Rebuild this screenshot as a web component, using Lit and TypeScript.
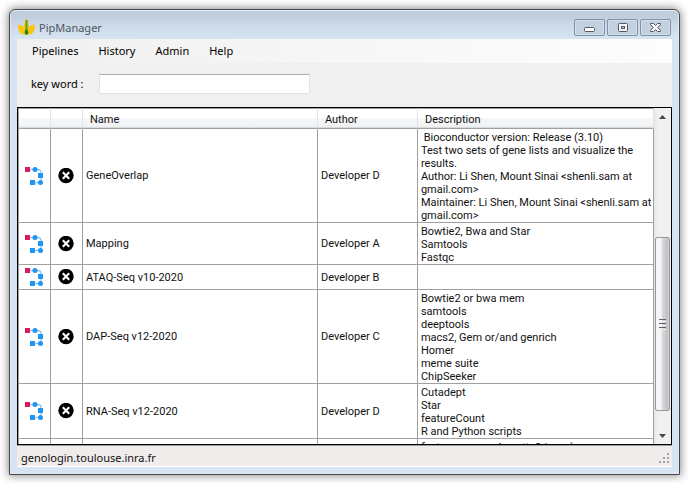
import { LitElement, html, css } from "lit";
import { customElement, property } from "lit/decorators.js";

interface Pipeline {
  name: string;
  author: string;
  description: string[];
}

const PIPELINES: Pipeline[] = [
  {
    name: "GeneOverlap",
    author: "Developer D",
    description: [
      " Bioconductor version: Release (3.10)",
      "Test two sets of gene lists and visualize the",
      "results.",
      "Author: Li Shen, Mount Sinai <shenli.sam at",
      "gmail.com>",
      "Maintainer: Li Shen, Mount Sinai <shenli.sam at",
      "gmail.com>",
    ],
  },
  { name: "Mapping", author: "Developer A", description: ["Bowtie2, Bwa and Star", "Samtools", "Fastqc"] },
  { name: "ATAQ-Seq v10-2020", author: "Developer B", description: [] },
  {
    name: "DAP-Seq v12-2020",
    author: "Developer C",
    description: [
      "Bowtie2 or bwa mem",
      "samtools",
      "deeptools",
      "macs2, Gem or/and genrich",
      "Homer",
      "meme suite",
      "ChipSeeker",
    ],
  },
  {
    name: "RNA-Seq v12-2020",
    author: "Developer D",
    description: ["Cutadept", "Star", "featureCount", "R and Python scripts"],
  },
  { name: "", author: "", description: ["features genes Annotte2d ssn )", "", ""] },
];

const runIcon = html`<svg width="19" height="18" viewBox="0 0 19 18" aria-hidden="true">
  <path d="M5 2.5H13Q16 2.5 16 5.5V15.5H8" fill="none" stroke="#8fc8f6" stroke-width="1.3" />
  <rect x="0" y="0" width="5" height="5" fill="#d81b60" />
  <circle cx="10" cy="2.5" r="2.5" fill="#2196f3" />
  <rect x="13" y="6" width="5" height="5" fill="#2196f3" />
  <circle cx="15.5" cy="15.5" r="2.5" fill="#2196f3" />
  <rect x="5" y="13" width="5" height="5" fill="#2196f3" />
</svg>`;

const removeIcon = html`<svg width="17" height="16" viewBox="0 0 17 16" aria-hidden="true">
  <circle cx="8" cy="7.5" r="7.7" fill="#000" />
  <path d="M4.8 4.3L11.2 10.7M11.2 4.3L4.8 10.7" stroke="#fff" stroke-width="2.1" />
</svg>`;

@customElement("title-bar")
export class TitleBar extends LitElement {
  static styles = css`
    :host {
      display: flex;
      align-items: center;
      height: 29px;
      padding: 6px 1px 0;
      box-sizing: border-box;
    }
    .logo {
      flex: none;
      margin-right: 4px;
    }
    .title {
      flex: 1;
      margin: 0;
      font: 11px/16px "Noto Sans", sans-serif;
      color: #4c5663;
    }
    .controls {
      display: flex;
      gap: 2px;
    }
    .control {
      display: grid;
      place-items: center;
      width: 31px;
      height: 17px;
      padding: 0;
      border: 1px solid #8290a8;
      border-radius: 2px;
      background: #c2d0e0;
      box-shadow: inset 0 0 0 1px #d3dfeb;
    }
  `;

  render() {
    return html`
      <svg class="logo" width="17" height="17" viewBox="0 0 17 17" aria-hidden="true">
        <path d="M0.3 6C4.5 5 8 9 7.8 15.3C3 16.5 -0.5 12 0.3 6Z" fill="#fcc60a" />
        <path d="M16.7 6C12.5 5 9 9 9.2 15.3C14 16.5 17.5 12 16.7 6Z" fill="#fcc60a" />
        <path d="M8.5 0C11.5 3 11.5 11 8.5 16C5.5 11 5.5 3 8.5 0Z" fill="#e3c009" />
        <path d="M8.5 1V11" stroke="#5e9a10" stroke-width="1.6" />
        <ellipse cx="8.5" cy="13.3" rx="1.8" ry="2.8" fill="#178a12" />
      </svg>
      <h1 class="title">PipManager</h1>
      <div class="controls">
        <button class="control" aria-label="Minimize">
          <svg width="12" height="11"><rect x="0.5" y="5.5" width="10" height="4" rx="1" fill="#fff" stroke="#535666" /></svg>
        </button>
        <button class="control" aria-label="Maximize">
          <svg width="12" height="11">
            <rect x="1.5" y="1.5" width="9" height="8" rx="1" fill="#f4f4f4" stroke="#535666" />
            <rect x="4.5" y="4.5" width="3" height="2" fill="#c2d0e0" stroke="#535666" />
          </svg>
        </button>
        <button class="control" aria-label="Close">
          <svg width="13" height="11">
            <path
              d="M1.5 1.5H4.5L6.5 3.5L8.5 1.5H11.5V2.5L8.8 5.5L11.5 8.5V9.5H8.5L6.5 7.5L4.5 9.5H1.5V8.5L4.2 5.5L1.5 2.5Z"
              fill="#f7f7f7"
              stroke="#535666"
            />
          </svg>
        </button>
      </div>
    `;
  }
}

@customElement("menu-bar")
export class MenuBar extends LitElement {
  static styles = css`
    :host {
      display: flex;
      gap: 4px;
      height: 24px;
      padding: 0 7px;
      background: linear-gradient(90deg, #f0f0f0, #fdfdfd);
    }
    .item {
      padding: 0 8px;
      border: 0;
      background: none;
      font: 11px/24px "Noto Sans", sans-serif;
      color: #000;
    }
  `;

  render() {
    return ["Pipelines", "History", "Admin", "Help"].map(
      (label) => html`<button class="item">${label}</button>`
    );
  }
}

@customElement("pipeline-grid")
export class PipelineGrid extends LitElement {
  @property({ attribute: false }) rows: Pipeline[] = [];

  static styles = css`
    :host {
      display: flex;
      min-height: 0;
      box-sizing: border-box;
      border: 1px solid #000;
      background: #fff;
      font: 11px/13px Roboto, "Liberation Sans", sans-serif;
      color: #111;
    }
    .viewport {
      flex: 1;
      min-width: 0;
      overflow: hidden;
    }
    .table {
      width: 100%;
      table-layout: fixed;
      border-collapse: separate;
      border-spacing: 0;
      border-left: 1px solid #a0a0a0;
    }
    .icon-col {
      width: 32px;
    }
    .name-col {
      width: 37%;
    }
    .author-col {
      width: 100px;
    }
    .head {
      height: 21px;
      box-sizing: border-box;
      padding: 2px 7px 0;
      border-top: 1px solid #a0a0a0;
      border-bottom: 1px solid #a0a0a0;
      border-right: 1px solid #e0e2e5;
      background: linear-gradient(#fff 0 45%, #f6f7f9 46%, #f1f2f4 92%, #d9dadc 93%);
      font-weight: normal;
      text-align: left;
    }
    .cell {
      height: 24px;
      padding: 0 3px;
      border-right: 1px solid #a0a0a0;
      border-bottom: 1px solid #a0a0a0;
      vertical-align: middle;
    }
    .icon-cell {
      padding: 0;
    }
    .icon-button {
      display: grid;
      place-items: center;
      width: 100%;
      padding: 0;
      border: 0;
      background: none;
    }
    .description {
      height: 22px;
      padding: 2px 3px 0;
      white-space: pre;
      overflow: hidden;
    }
    .line {
      height: 13px;
    }
    .scrollbar {
      display: flex;
      flex-direction: column;
      width: 17px;
      background: linear-gradient(90deg, #e6e6e6, #f0f0f0 4px, #f2f2f2);
    }
    .arrow {
      display: grid;
      place-items: center;
      height: 17px;
      padding: 0;
      border: 0;
      background: none;
    }
    .track {
      display: flex;
      flex-direction: column;
      flex: 1;
    }
    .before {
      flex: 113;
    }
    .thumb {
      display: flex;
      flex: 173;
      flex-direction: column;
      align-items: center;
      justify-content: center;
      gap: 1px;
      margin: 0 1px;
      border: 1px solid #979797;
      border-radius: 2px;
      box-sizing: border-box;
      background: linear-gradient(90deg, #f5f5f5 0 40%, #d8d8dc 50%, #bfc0c6 90%, #dcdcde);
    }
    .grip {
      width: 7px;
      height: 1px;
      border-top: 1px solid #60636b;
      border-bottom: 1px solid #f2f2f2;
    }
    .after {
      flex: 16;
    }
  `;

  render() {
    return html`
      <div class="viewport">
        <table class="table">
          <colgroup>
            <col class="icon-col" />
            <col class="icon-col" />
            <col class="name-col" />
            <col class="author-col" />
            <col />
          </colgroup>
          <thead>
            <tr>
              <th class="head" aria-label="Run"></th>
              <th class="head" aria-label="Remove"></th>
              <th class="head">Name</th>
              <th class="head">Author</th>
              <th class="head">Description</th>
            </tr>
          </thead>
          <tbody>
            ${this.rows.map(
              (row) => html`<tr>
                <td class="cell icon-cell"><button class="icon-button" aria-label="Run ${row.name}">${runIcon}</button></td>
                <td class="cell icon-cell">
                  <button class="icon-button" aria-label="Remove ${row.name}">${removeIcon}</button>
                </td>
                <td class="cell">${row.name}</td>
                <td class="cell">${row.author}</td>
                <td class="cell description">${row.description.map((line) => html`<div class="line">${line}</div>`)}</td>
              </tr>`
            )}
          </tbody>
        </table>
      </div>
      <div class="scrollbar">
        <button class="arrow" aria-label="Scroll up">
          <svg width="7" height="4"><path d="M0 4L3.5 0L7 4Z" fill="#44464c" /></svg>
        </button>
        <div class="track">
          <div class="before"></div>
          <div class="thumb"><i class="grip"></i><i class="grip"></i><i class="grip"></i></div>
          <div class="after"></div>
        </div>
        <button class="arrow" aria-label="Scroll down">
          <svg width="7" height="4"><path d="M0 0H7L3.5 4Z" fill="#44464c" /></svg>
        </button>
      </div>
    `;
  }
}

@customElement("app-root")
export class AppRoot extends LitElement {
  static styles = css`
    :host {
      display: block;
      box-sizing: border-box;
      height: 100vh;
      padding: 9px 8px 8px 9px;
      background: #fff;
    }
    .window {
      display: flex;
      flex-direction: column;
      box-sizing: border-box;
      height: 100%;
      padding: 0 7px 7px;
      border: 1px solid #45474d;
      border-radius: 6px 6px 0 0;
      background: linear-gradient(#bdcbdb 0, #c3cfde 8px, #cddae7 16px, #d7e4f1 29px);
      box-shadow:
        inset 0 0 0 1px #e3ebf4,
        0 0 8px 1px #8c8c8c;
    }
    .search {
      display: flex;
      align-items: center;
      height: 44px;
      padding: 0 14px 2px;
      box-sizing: border-box;
      gap: 15px;
      background: #f0f0f0;
      font: 11px/14px "Noto Sans", sans-serif;
      color: #000;
    }
    .key {
      box-sizing: border-box;
      width: 211px;
      height: 20px;
      padding: 0 4px;
      border: 1px solid #dfe3ea;
      border-top-color: #abadb3;
      background: #fff;
      font: inherit;
    }
    .grid {
      flex: 1;
    }
    .status {
      display: flex;
      align-items: center;
      justify-content: space-between;
      height: 22px;
      box-sizing: border-box;
      padding: 3px 3px 0 4px;
      border-top: 1px solid #9c9c9c;
      border-bottom: 1px solid #fff;
      background: #f0eceb;
      font: 11px/16px "Noto Sans", sans-serif;
      color: #111;
    }
  `;

  render() {
    return html`
      <div class="window">
        <title-bar></title-bar>
        <menu-bar></menu-bar>
        <div class="search">
          <label for="key">key word :</label>
          <input class="key" id="key" type="text" />
        </div>
        <pipeline-grid class="grid" .rows=${PIPELINES}></pipeline-grid>
        <footer class="status">
          <span>genologin.toulouse.inra.fr</span>
          <svg width="10" height="10" aria-hidden="true">
            <path d="M8 0h2v2h-2zM4 4h2v2h-2zM8 4h2v2h-2zM0 8h2v2h-2zM4 8h2v2h-2zM8 8h2v2h-2z" fill="#a3a1a1" />
          </svg>
        </footer>
      </div>
    `;
  }
}
